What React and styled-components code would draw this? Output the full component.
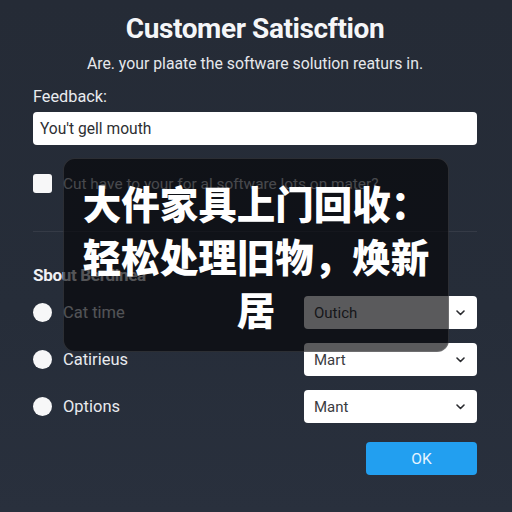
import React from "react";
import styled, { createGlobalStyle } from "styled-components";

const GlobalStyle = createGlobalStyle`
  html, body {
    margin: 0;
    padding: 0;
  }
  body {
    font-family: Roboto, "Liberation Sans", sans-serif;
    background: #262c38;
  }
`;

const Page = styled.div`
  position: relative;
  width: 512px;
  height: 512px;
  box-sizing: border-box;
  padding: 14px 35px 0 33px;
  background: linear-gradient(180deg, #252b36 0%, #262d39 60%, #29303d 100%);
  color: #f2f4f7;
  display: flex;
  flex-direction: column;
`;

const Title = styled.h1`
  margin: 0;
  font-size: 28px;
  line-height: 30px;
  font-weight: 700;
  text-align: center;
  letter-spacing: -0.4px;
  color: #f5f6f8;
`;

const Subtitle = styled.p`
  margin: 10px 0 0;
  font-size: 15.8px;
  line-height: 20px;
  text-align: center;
  color: #e6e8ec;
`;

const Label = styled.div`
  margin-top: 13px;
  font-size: 16.3px;
  line-height: 20px;
  color: #e9ebef;
`;

const TextInput = styled.div`
  margin-top: 5px;
  height: 33px;
  box-sizing: border-box;
  padding: 0 7px;
  display: flex;
  align-items: center;
  background: #ffffff;
  border-radius: 4px;
  font-size: 15.6px;
  color: #2e2f33;
`;

const CheckRow = styled.div`
  margin-top: 29px;
  display: flex;
  align-items: center;
  gap: 11px;
  font-size: 15.4px;
  color: #c9ccd2;
`;

const Box = styled.span`
  width: 19px;
  height: 19px;
  border-radius: 3px;
  background: #f7f7f8;
  flex-shrink: 0;
`;

const Divider = styled.hr`
  margin: 38px 0 0;
  border: 0;
  height: 1px;
  background: rgba(255, 255, 255, 0.07);
`;

const Heading = styled.h2`
  margin: 33px 0 0;
  font-size: 17px;
  line-height: 20px;
  font-weight: 700;
  color: #f0f1f4;
  letter-spacing: -0.3px;
`;

const Options = styled.div`
  margin-top: 11px;
  display: flex;
  flex-direction: column;
  gap: 14px;
`;

const OptionRow = styled.div`
  display: flex;
  align-items: center;
  justify-content: space-between;
`;

const RadioLabel = styled.label`
  display: flex;
  align-items: center;
  gap: 11px;
  font-size: 16.5px;
  color: #e8eaee;
`;

const Dot = styled.span`
  width: 19px;
  height: 19px;
  border-radius: 50%;
  background: #f7f7f8;
`;

const Select = styled.div`
  width: 173px;
  height: 33px;
  box-sizing: border-box;
  padding: 0 12px 0 10px;
  display: flex;
  align-items: center;
  justify-content: space-between;
  background: #ffffff;
  border-radius: 4px;
  font-size: 15px;
  color: #3a3b3f;
`;

const Actions = styled.div`
  margin-top: 19px;
  display: flex;
  justify-content: flex-end;
`;

const OkButton = styled.button`
  width: 111px;
  height: 33px;
  border: 0;
  border-radius: 4px;
  background: #229ff0;
  color: #e6f4ff;
  font-family: Roboto, "Liberation Sans", sans-serif;
  font-size: 15.5px;
`;

const Overlay = styled.div`
  position: absolute;
  left: 63px;
  top: 158px;
  width: 386px;
  height: 194px;
  box-sizing: border-box;
  padding: 17px 14px 0;
  border-radius: 12px;
  border: 1px solid rgba(255, 255, 255, 0.12);
  background: rgba(4, 5, 8, 0.66);
  color: #ffffff;
  font-family: "Noto Sans CJK SC", "Noto Sans", sans-serif;
  font-size: 38.5px;
  font-weight: 900;
  line-height: 53px;
  text-align: center;
`;

function Chevron() {
  return (
    <svg width="9" height="6" viewBox="0 0 9 6">
      <polyline
        points="1,1 4.5,4.5 8,1"
        fill="none"
        stroke="#2a2b2f"
        strokeWidth="1.6"
        strokeLinecap="round"
        strokeLinejoin="round"
      />
    </svg>
  );
}

const choices = [
  { label: "Cat time", value: "Outich" },
  { label: "Catirieus", value: "Mart" },
  { label: "Options", value: "Mant" },
];

export default function App() {
  return (
    <Page>
      <GlobalStyle />
      <Title>Customer Satiscftion</Title>
      <Subtitle>Are. your plaate the software solution reaturs in.</Subtitle>
      <Label>Feedback:</Label>
      <TextInput>You't gell mouth</TextInput>
      <CheckRow>
        <Box />
        Cut have to your for al software lots on mater?
      </CheckRow>
      <Divider />
      <Heading>Sbout Berdlnea</Heading>
      <Options>
        {choices.map((c) => (
          <OptionRow key={c.label}>
            <RadioLabel>
              <Dot />
              {c.label}
            </RadioLabel>
            <Select>
              {c.value}
              <Chevron />
            </Select>
          </OptionRow>
        ))}
      </Options>
      <Actions>
        <OkButton>OK</OkButton>
      </Actions>
      <Overlay>大件家具上门回收：轻松处理旧物，焕新居</Overlay>
    </Page>
  );
}
